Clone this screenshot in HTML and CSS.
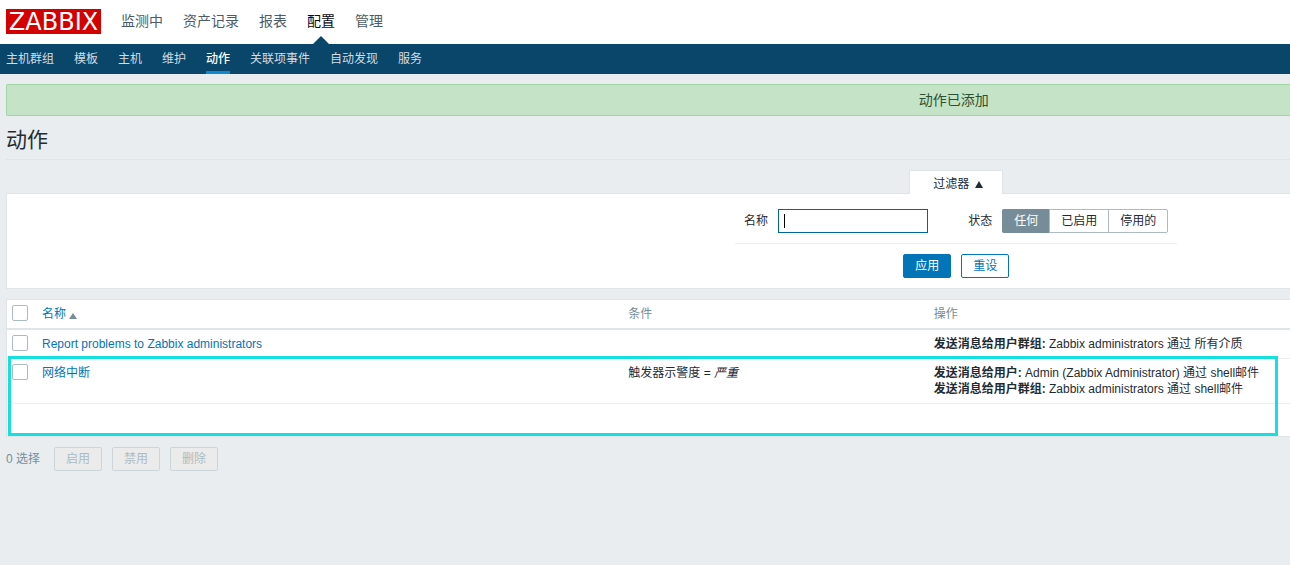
FILE: index.html
```html
<!DOCTYPE html>
<html lang="zh-CN">
<head>
<meta charset="utf-8">
<title>动作</title>
<link rel="stylesheet" href="styles.css">
</head>
<body>
<header class="top">
  <a class="logo" href="#">ZABBIX</a>
  <nav class="top-nav">
    <a href="#">监测中</a>
    <a href="#">资产记录</a>
    <a href="#">报表</a>
    <a class="selected" href="#">配置</a>
    <a href="#">管理</a>
  </nav>
</header>
<nav class="sub-nav">
  <a href="#">主机群组</a>
  <a href="#">模板</a>
  <a href="#">主机</a>
  <a href="#">维护</a>
  <a class="selected" href="#">动作</a>
  <a href="#">关联项事件</a>
  <a href="#">自动发现</a>
  <a href="#">服务</a>
</nav>
<main class="content">
  <div class="message" role="status">动作已添加</div>
  <h1 class="title">动作</h1>

  <div class="filter-tab-row">
    <button class="filter-tab" type="button">过滤器<svg class="arrow" width="8" height="7" viewBox="0 0 8 7"><path d="M4 0 8 7H0z" fill="currentColor"/></svg></button>
  </div>
  <form class="filter">
    <div class="filter-fields">
      <div class="field">
        <label for="name">名称</label>
        <span class="input-wrap"><input class="text-input" id="name" type="text"><span class="caret"></span></span>
      </div>
      <div class="field" role="radiogroup" aria-labelledby="status-label">
        <span id="status-label">状态</span>
        <div class="segments">
          <input class="hidden" type="radio" name="status" id="any" checked><label for="any">任何</label>
          <input class="hidden" type="radio" name="status" id="on"><label for="on">已启用</label>
          <input class="hidden" type="radio" name="status" id="off"><label for="off">停用的</label>
        </div>
      </div>
    </div>
    <div class="filter-buttons">
      <button class="btn primary" type="button">应用</button>
      <button class="btn" type="button">重设</button>
    </div>
  </form>

  <div class="list">
    <table class="actions">
      <colgroup><col class="c-check"><col class="c-name"><col class="c-cond"><col></colgroup>
      <thead>
        <tr>
          <th><input class="check" type="checkbox" aria-label="全选"></th>
          <th><a href="#">名称<svg class="sort" width="8" height="6" viewBox="0 0 8 6"><path d="M4 0 8 6H0z" fill="#768d99"/></svg></a></th>
          <th>条件</th>
          <th>操作</th>
        </tr>
      </thead>
      <tbody>
        <tr>
          <td><input class="check" type="checkbox" aria-label="Report problems to Zabbix administrators"></td>
          <td><a href="#">Report problems to Zabbix administrators</a></td>
          <td></td>
          <td><b>发送消息给用户群组:</b> Zabbix administrators 通过 所有介质</td>
        </tr>
        <tr>
          <td><input class="check" type="checkbox" aria-label="网络中断"></td>
          <td><a href="#">网络中断</a></td>
          <td>触发器示警度 = <em>严重</em></td>
          <td><b>发送消息给用户:</b> Admin (Zabbix Administrator) 通过 shell邮件<br><b>发送消息给用户群组:</b> Zabbix administrators 通过 shell邮件</td>
        </tr>
      </tbody>
      <tfoot><tr><td colspan="4"></td></tr></tfoot>
    </table>
    <div class="highlight"></div>
  </div>

  <div class="bulk">
    <span class="count">0 选择</span>
    <button class="btn" type="button" disabled>启用</button>
    <button class="btn" type="button" disabled>禁用</button>
    <button class="btn" type="button" disabled>删除</button>
  </div>
</main>
</body>
</html>
```

FILE: styles.css
```css
* { box-sizing: border-box; }
body {
  margin: 0;
  background: #e9edf0;
  color: #1f2c33;
  font: 12px/16px "Liberation Sans", "Noto Sans CJK SC", sans-serif;
}
a { color: #0275b8; text-decoration: none; }
button, input { font: inherit; }

.top {
  display: flex;
  align-items: center;
  gap: 20px;
  height: 44px;
  padding: 0 6px;
  background: #fff;
}
.logo {
  width: 95px;
  height: 25px;
  margin-bottom: 2px;
  background: #d40000;
  color: #fff;
  font: 24px/27px "DejaVu Sans", sans-serif;
  text-align: center;
}
.top-nav { display: flex; gap: 20px; height: 44px; font-size: 14px; line-height: 42px; }
.top-nav a { position: relative; color: #4c5c66; }
.top-nav .selected { color: #0a0a14; }
.top-nav .selected::after {
  content: "";
  position: absolute;
  bottom: 0;
  left: 6px;
  border: solid transparent;
  border-width: 0 8px 8px;
  border-bottom-color: #0a466a;
}
.sub-nav { display: flex; gap: 20px; height: 30px; padding: 0 6px; background: #0a466a; }
.sub-nav a { padding-top: 7px; border-bottom: 3px solid transparent; color: #d2dde3; }
.sub-nav .selected { border-color: #1188cf; color: #fff; font-weight: 500; }

.content { padding: 10px 0 0 6px; }
.message {
  padding: 7px 6px 7px 48%;
  border: 1px solid #a3d6a6;
  border-right: 0;
  border-radius: 2px 0 0 2px;
  background: #c5e3c7;
  color: #2d5030;
  font-size: 14px;
  text-align: center;
}
.title {
  margin: 0 0 10px;
  padding: 12px 0 7px;
  border-bottom: 1px solid #dfe4e7;
  font-size: 21px;
  font-weight: 400;
  line-height: 24px;
}
.filter-tab-row { display: flex; justify-content: center; padding-left: 48%; }
.filter-tab {
  position: relative;
  z-index: 1;
  height: 24px;
  margin-bottom: -1px;
  padding: 2px 19px 0 23px;
  border: 1px solid #dfe4e7;
  border-bottom: 0;
  background: #fff;
  color: #1f2c33;
}
.arrow { margin-left: 6px; }
.filter {
  display: flex;
  flex-direction: column;
  align-items: center;
  gap: 10px;
  padding: 15px 1px 10px 48%;
  border: 1px solid #dfe4e7;
  border-right: 0;
  background: #fff;
}
.filter-fields {
  display: flex;
  gap: 40px;
  padding: 0 9px 10px;
  border-bottom: 1px solid #ebeef0;
  white-space: nowrap;
}
.field { display: flex; align-items: center; gap: 10px; }
.input-wrap { position: relative; display: flex; }
.text-input { width: 150px; height: 24px; padding: 0 5px; border: 1px solid #006699; outline: 0; }
.caret { position: absolute; left: 6px; top: 5px; width: 1px; height: 14px; background: #000; }
.hidden { position: absolute; width: 1px; height: 1px; margin: 0; opacity: 0; overflow: hidden; }
.segments { display: flex; border: 1px solid #acbbc2; border-radius: 2px; }
.segments label { padding: 3px 11px; border-left: 1px solid #acbbc2; }
.segments label:first-of-type { margin: -1px 0 -1px -1px; padding: 4px 11px 4px 12px; border-left: 0; border-radius: 2px 0 0 2px; }
.segments input:checked + label { background: #768d99; color: #fff; }
.filter-buttons { display: flex; gap: 10px; }
.btn {
  width: 48px;
  height: 24px;
  padding: 0;
  border: 1px solid #0275b8;
  border-radius: 2px;
  background: #fff;
  color: #0275b8;
}
.primary { background: #0275b8; color: #fff; }
.btn:disabled { border-color: #ccd5d9; background: #ebebeb; color: #acbbc2; }

.list { position: relative; margin-top: 10px; border: 1px solid #dfe4e7; border-right: 0; background: #fff; }
.actions { width: 100%; border-collapse: separate; border-spacing: 0; table-layout: fixed; }
.c-check { width: 30px; }
.c-name { width: 45.7%; }
.c-cond { width: 23.8%; }
.actions th, .actions td { padding: 6px 5px; border-bottom: 1px solid #ebeef0; text-align: left; vertical-align: top; }
.actions th { border-bottom: 2px solid #dfe4e7; color: #768d99; font-weight: 400; }
.actions tfoot td { height: 32px; border: 0; }
.sort { margin-left: 3px; vertical-align: -1px; }
.check {
  display: block;
  appearance: none;
  width: 16px;
  height: 16px;
  margin: -1px 0 0;
  border: 1px solid #acbbc2;
  border-radius: 2px;
  background: #fff;
}
.highlight {
  position: absolute;
  inset: 56px 12px 0 1px;
  border: 3px solid #17dfdf;
  pointer-events: none;
}
.bulk { display: flex; align-items: center; gap: 10px; margin-top: 10px; }
.count { margin-right: 4px; color: #768d99; }
```
